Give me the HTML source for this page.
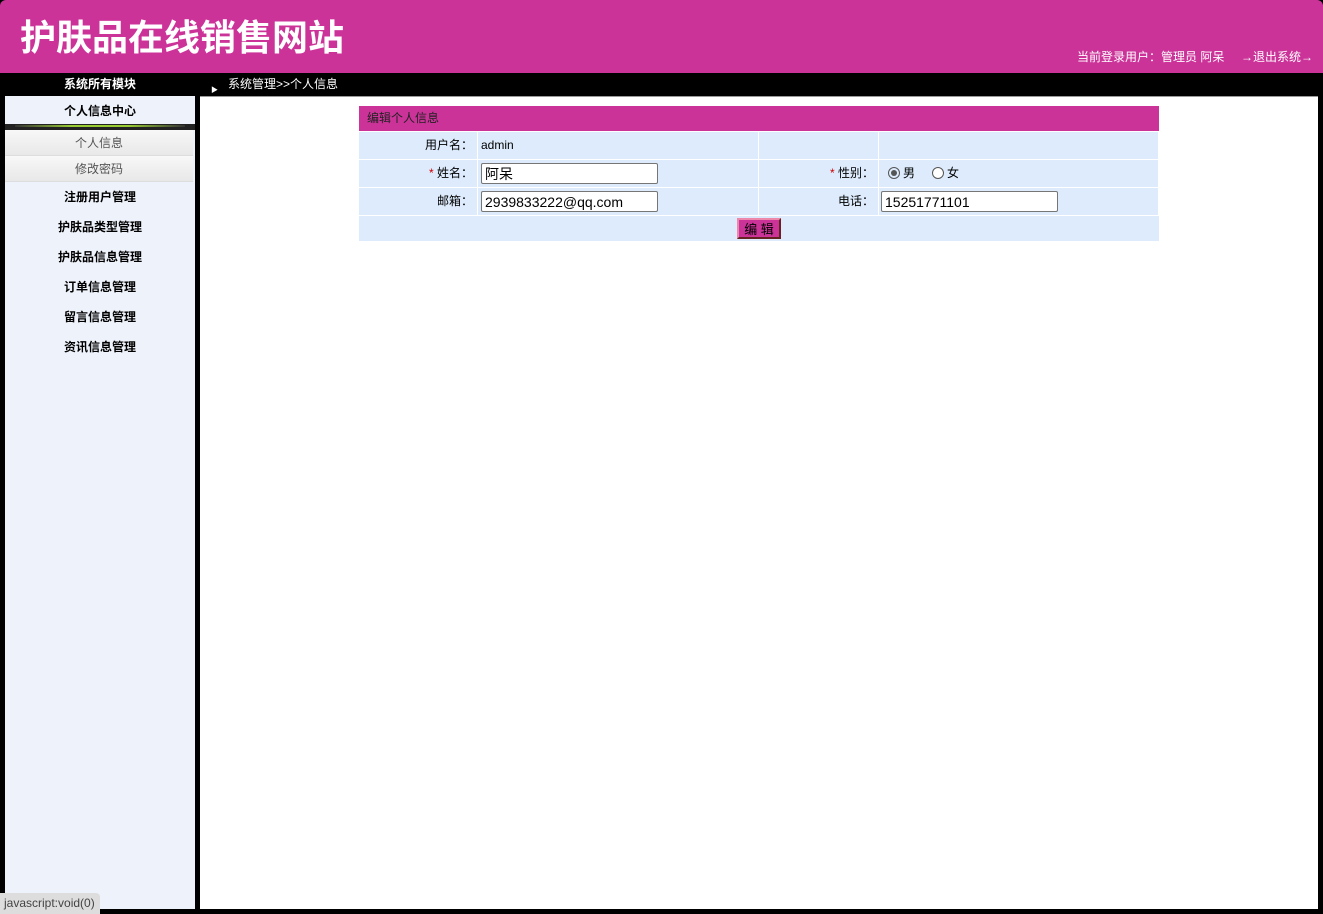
<!DOCTYPE html>
<html><head><meta charset="utf-8"><style>
*{margin:0;padding:0;box-sizing:border-box}
body{width:1323px;height:914px;background:#000;position:relative;overflow:hidden;font-family:"Liberation Sans","Noto Sans CJK SC",sans-serif;font-size:12px}
.hd{position:absolute;left:0;top:0;width:1323px;height:73px;background:#CC3399;border-radius:6px 6px 0 0}
.title{position:absolute;left:20px;top:14px;font-size:36px;font-weight:bold;color:#fff;line-height:48px}
.user{position:absolute;left:1077px;top:48px;color:#fff;font-size:12px}
.exit{position:absolute;left:1241px;top:48px;color:#fff;font-size:12px}
.bar1{position:absolute;left:5px;width:190px;top:75px;text-align:center;color:#fff;font-weight:bold;font-size:12px}
.bar2{position:absolute;left:211px;top:75px;color:#fff;font-size:12px}
.side{position:absolute;left:5px;top:96px;width:190px;height:813px;background:#EEF2FA}
.main{position:absolute;left:200px;top:96px;width:1118px;height:813px;background:#fff;border-top:1px solid #999}
.mi{text-align:center;font-weight:bold;color:#000;height:30px;line-height:30px}
.sub{text-align:center;color:#555;height:26px;line-height:26px;background:linear-gradient(#f8f8f8,#e8e8e8);border-bottom:1px solid #ddd;width:188px}
.tb{position:absolute;left:359px;top:106px;width:800px}
.th{height:25px;background:#CC3399;color:#222;line-height:24px;padding-left:8px}
.row{display:flex;height:28px;background:#DDEBFC;border-top:1px solid #fff}
.row div{border-right:1px solid #fff;line-height:27px}
.l{width:119px;text-align:right;padding-right:4px}
.v{width:281px;padding-left:3px}
.l2{width:120px;text-align:right;padding-right:4px}
.v2{flex:1;padding-left:2px}
input.t{width:177px;height:21px;border:1px solid #767676;border-radius:2px;font-size:14px;padding-left:3px;font-family:inherit;vertical-align:middle}
.r{color:#c00}
.btn{display:inline-block;background:#CC3399;border:2px solid;border-color:#e8a #622 #622 #e8a;color:#000;font-size:13px;padding:0 5px;height:21px;line-height:19px;margin-top:2px}
.status{position:absolute;left:0;top:893px;height:21px;width:100px;background:#ddd;color:#444;font-size:12px;line-height:21px;padding-left:4px;border-radius:0 4px 0 0}
</style></head><body>
<div class="hd"><div class="title">护肤品在线销售网站</div><div class="user">当前登录用户：管理员 阿呆</div><div class="exit">→退出系统→</div></div>
<div class="bar1">系统所有模块</div>
<div class="bar2"><span style="font-size:7px;position:relative;top:4px">▶</span>&nbsp;&nbsp; 系统管理&gt;&gt;个人信息</div>
<div class="side">
<div class="mi" style="height:28px">个人信息中心</div>
<div style="height:6px;background:#222;padding:1px 10px 0"><div style="height:2px;background:linear-gradient(90deg,#333,#9c3,#9c3,#333)"></div></div>
<div class="sub">个人信息</div><div class="sub">修改密码</div>
<div class="mi">注册用户管理</div><div class="mi">护肤品类型管理</div><div class="mi">护肤品信息管理</div><div class="mi">订单信息管理</div><div class="mi">留言信息管理</div><div class="mi">资讯信息管理</div>
</div>
<div class="main"></div>
<div class="tb">
<div class="th">编辑个人信息</div>
<div class="row"><div class="l">用户名：</div><div class="v">admin</div><div class="l2"></div><div class="v2"></div></div>
<div class="row"><div class="l"><span class="r">*</span> 姓名：</div><div class="v"><input class="t" value="阿呆"></div><div class="l2"><span class="r">*</span> 性别：</div><div class="v2">&nbsp;&nbsp;<span style="display:inline-block;width:12px;height:12px;border:1px solid #555;border-radius:50%;vertical-align:-2px;position:relative"><span style="position:absolute;left:2px;top:2px;width:6px;height:6px;border-radius:50%;background:#555"></span></span> 男 &nbsp;&nbsp;&nbsp;&nbsp;<span style="display:inline-block;width:12px;height:12px;border:1px solid #555;border-radius:50%;vertical-align:-2px;background:#fff"></span> 女</div></div>
<div class="row"><div class="l">邮箱：</div><div class="v"><input class="t" value="2939833222@qq.com"></div><div class="l2">电话：</div><div class="v2"><input class="t" value="15251771101"></div></div>
<div class="row" style="height:26px"><div style="width:100%;text-align:center;border:none;line-height:24px"><span class="btn">编 辑</span></div></div>
</div>
<div class="status">javascript:void(0)</div>
</body></html>
